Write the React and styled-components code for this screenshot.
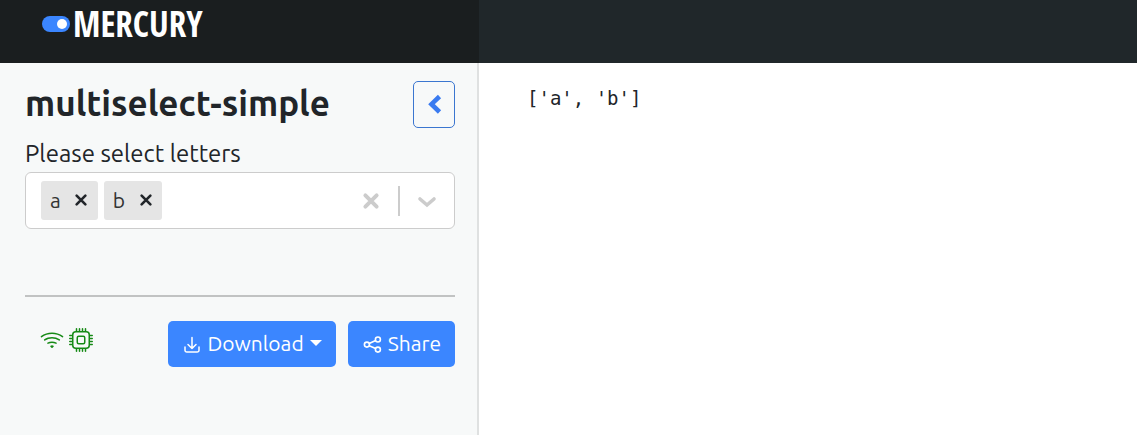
import React from "react";
import styled, { createGlobalStyle } from "styled-components";
import { BsCpu, BsWifi } from "react-icons/bs";

const GlobalStyle = createGlobalStyle`
  *, *::before, *::after { box-sizing: border-box; }
  body {
    margin: 0;
    background: #ffffff;
    color: #212529;
    font-family: "Ubuntu", "Noto Sans", sans-serif;
    font-size: 21px;
    line-height: 30px;
  }
  button, input { font: inherit; color: inherit; }
`;

const Page = styled.div`
  display: flex;
  flex-direction: column;
  min-height: 100vh;
`;

const Navbar = styled.header`
  display: flex;
  height: 63px;
  background: #20272a;
`;

const BrandArea = styled.div`
  width: 479px;
  padding: 8px 42px;
  background: #1a1e1f;
`;

const Brand = styled.a`
  display: inline-flex;
  align-items: center;
  gap: 2px;
  height: 32px;
  color: #ffffff;
  font-family: "Ubuntu Condensed", "Open Sans Condensed", "Noto Sans Condensed", "Lato", sans-serif;
  font-size: 35px;
  font-weight: 700;
  line-height: 32px;
  text-decoration: none;
`;

const Body = styled.div`
  display: flex;
  flex: 1;
`;

const Sidebar = styled.aside`
  width: 479px;
  padding: 18px 24px 24px 25px;
  border-right: 2px solid #dfe1e1;
  background: #f7f9f9;
`;

const TitleRow = styled.div`
  display: flex;
  justify-content: space-between;
  align-items: flex-start;
  margin-right: -2px;
`;

const Title = styled.h1`
  margin: 0;
  font-size: 35px;
  font-weight: 600;
  line-height: 44px;
  white-space: nowrap;
`;

const CollapseButton = styled.button`
  display: flex;
  align-items: center;
  justify-content: center;
  width: 42px;
  height: 47px;
  padding: 0;
  border: 1px solid #3b76d0;
  border-radius: 5px;
  background: transparent;
  color: #3a7bf0;
`;

const Field = styled.div`
  margin: 8px -2px 0 0;
`;

const Label = styled.label`
  display: block;
  font-size: 24px;
  line-height: 36px;
`;

const SelectBox = styled.div`
  display: flex;
  align-items: center;
  gap: 6px;
  height: 57px;
  padding: 0 14px 0 15px;
  border: 1px solid #cccccc;
  border-radius: 6px;
  background: #ffffff;
`;

const Chip = styled.span`
  display: flex;
  align-items: center;
  gap: 4px;
  height: 39px;
  padding: 0 0 2px 9px;
  border-radius: 3px;
  background: #e5e5e5;
  color: #333333;
`;

const IconButton = styled.button`
  display: flex;
  align-items: center;
  justify-content: center;
  width: ${(p) => p.$width}px;
  height: 38px;
  padding: 0;
  border: 0;
  background: transparent;
  color: ${(p) => p.$color};
`;

const ChipInput = styled.input`
  flex: 1;
  min-width: 0;
  border: 0;
  outline: 0;
  background: transparent;
`;

const Separator = styled.span`
  width: 2px;
  height: 30px;
  background: #cccccc;
`;

const Indicators = styled.div`
  display: flex;
  align-items: center;
  gap: 14px;
`;

const Divider = styled.hr`
  height: 2px;
  margin: 66px -2px 24px 0;
  border: 0;
  background: #c1c3c3;
`;

const Footer = styled.div`
  display: flex;
  justify-content: space-between;
  margin-right: -2px;
`;

const Status = styled.div`
  display: flex;
  align-items: center;
  gap: 5px;
  height: 38px;
  padding-left: 15px;
  color: #168a16;
`;

const Actions = styled.div`
  display: flex;
  gap: 12px;
`;

const ActionButton = styled.button`
  display: flex;
  align-items: center;
  gap: 6px;
  height: 46px;
  padding: 0 14px 2px 15px;
  border: 0;
  border-radius: 5px;
  background: #3b86ff;
  color: #ffffff;
`;

const Caret = styled.span`
  border: 6px solid transparent;
  border-top-color: #ffffff;
  border-bottom: 0;
`;

const Output = styled.main`
  flex: 1;
  padding: 20px 48px;
`;

const Pre = styled.pre`
  margin: 0;
  font-family: "DejaVu Sans Mono", monospace;
  font-size: 19px;
  line-height: 30px;
`;

function Cross({ size, stroke }) {
  return (
    <svg width={size} height={size} viewBox="0 0 16 16" aria-hidden="true">
      <path d="M3 3 13 13M13 3 3 13" fill="none" stroke="currentColor" strokeWidth={stroke} strokeLinecap="round" />
    </svg>
  );
}

function DownloadIcon() {
  return (
    <svg width="18" height="20" viewBox="-1 -4 18 20" aria-hidden="true">
      <path
        d="M8 .5V11.5M4 7.5 8 11.5 12 7.5M1 10V13.2A1.8 1.8 0 0 0 2.8 15H13.2A1.8 1.8 0 0 0 15 13.2V10"
        fill="none"
        stroke="currentColor"
        strokeWidth="1.5"
        strokeLinecap="round"
        strokeLinejoin="round"
      />
    </svg>
  );
}

function ShareIcon() {
  return (
    <svg width="19" height="20" viewBox="0 -2 19 20" aria-hidden="true">
      <g fill="none" stroke="currentColor" strokeWidth="1.6">
        <circle cx="3.9" cy="9.6" r="2.5" />
        <circle cx="14.9" cy="4.5" r="2.5" />
        <circle cx="14.9" cy="14.6" r="2.5" />
        <path d="M6.2 8.5 12.6 5.6M6.2 10.7 12.6 13.5" />
      </g>
    </svg>
  );
}

function Letter({ value }) {
  return (
    <Chip>
      {value}
      <IconButton type="button" $width={33} $color="#212529" aria-label={`Remove ${value}`}>
        <Cross size={14} stroke={3} />
      </IconButton>
    </Chip>
  );
}

export default function App() {
  return (
    <Page>
      <GlobalStyle />
      <Navbar>
        <BrandArea>
          <Brand href="#">
            <svg width="29" height="18" viewBox="0 0 29 18" aria-hidden="true">
              <rect x="0" y="1" width="28" height="16" rx="8" fill="#3b86ff" />
              <circle cx="20" cy="9" r="5" fill="#ffffff" />
            </svg>
            MERCURY
          </Brand>
        </BrandArea>
      </Navbar>
      <Body>
        <Sidebar>
          <TitleRow>
            <Title>multiselect-simple</Title>
            <CollapseButton type="button" aria-label="Hide sidebar">
              <svg width="20" height="22" viewBox="0 0 20 22" aria-hidden="true">
                <path d="M15.5 2.5 7.5 10.2 15.5 18" fill="none" stroke="currentColor" strokeWidth="4.6" />
              </svg>
            </CollapseButton>
          </TitleRow>
          <Field>
            <Label htmlFor="letters">Please select letters</Label>
            <SelectBox>
              <Letter value="a" />
              <Letter value="b" />
              <ChipInput id="letters" type="text" autoComplete="off" />
              <Indicators>
                <IconButton type="button" $width={26} $color="#cccccc" aria-label="Clear all">
                  <Cross size={18} stroke={3.5} />
                </IconButton>
                <Separator />
                <IconButton type="button" $width={26} $color="#cccccc" aria-label="Open options">
                  <svg width="22" height="22" viewBox="0 0 22 22" aria-hidden="true">
                    <path d="M4 9 11 15 18 9" fill="none" stroke="currentColor" strokeWidth="3.6" strokeLinecap="round" />
                  </svg>
                </IconButton>
              </Indicators>
            </SelectBox>
          </Field>
          <Divider />
          <Footer>
            <Status>
              <BsWifi size={24} />
              <BsCpu size={24} />
            </Status>
            <Actions>
              <ActionButton type="button">
                <DownloadIcon />
                Download
                <Caret />
              </ActionButton>
              <ActionButton type="button">
                <ShareIcon />
                Share
              </ActionButton>
            </Actions>
          </Footer>
        </Sidebar>
        <Output>
          <Pre>['a', 'b']</Pre>
        </Output>
      </Body>
    </Page>
  );
}
